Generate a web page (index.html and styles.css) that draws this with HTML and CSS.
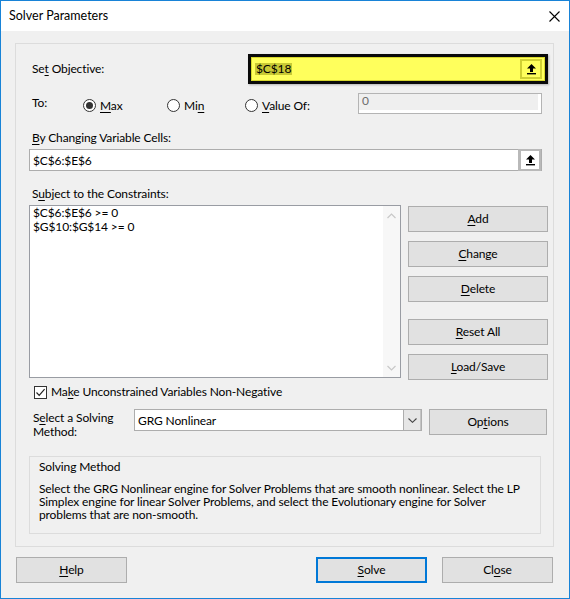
FILE: index.html
```html
<!DOCTYPE html>
<html>
<head>
<meta charset="utf-8">
<title>Solver Parameters</title>
<link rel="stylesheet" href="styles.css">
</head>
<body>
<div class="window">
  <div class="titlebar">
    <span class="title">Solver Parameters</span>
    <svg class="close" width="11" height="11" viewBox="0 0 11 11"><path d="M0.5 0.5 L10.5 10.5 M10.5 0.5 L0.5 10.5" stroke="#000" stroke-width="1.1" fill="none"/></svg>
  </div>
  <div class="client">
    <div class="group">
      <div class="row-obj">
        <span class="lbl obj-lbl">Se<u>t</u> Objective:</span>
        <div class="objbox">
          <div class="objinner">
            <span class="sel">$C$18</span>
            <span class="refbtn yellow">
              <svg width="11" height="12" viewBox="0 0 11 12"><path d="M5.5 1 L10 5.6 L7 5.6 L7 9 L4 9 L4 5.6 L1 5.6 Z" fill="#000"/><rect x="1" y="10" width="9" height="1.4" fill="#000"/></svg>
            </span>
          </div>
        </div>
      </div>

      <div class="row-to">
        <span class="lbl to-lbl">To:</span>
        <label class="radio r-max"><svg width="13" height="13" viewBox="0 0 13 13"><circle cx="6.5" cy="6.5" r="6" fill="#fff" stroke="#333"/><circle cx="6.5" cy="6.5" r="3.5" fill="#333"/></svg><span><u>M</u>ax</span></label>
        <label class="radio r-min"><svg width="13" height="13" viewBox="0 0 13 13"><circle cx="6.5" cy="6.5" r="6" fill="#fff" stroke="#333"/></svg><span>Mi<u>n</u></span></label>
        <label class="radio r-val"><svg width="13" height="13" viewBox="0 0 13 13"><circle cx="6.5" cy="6.5" r="6" fill="#fff" stroke="#333"/></svg><span><u>V</u>alue Of:</span></label>
        <div class="valbox"><div class="valinner">0</div></div>
      </div>

      <div class="lbl sec-lbl chg-lbl"><u>B</u>y Changing Variable Cells:</div>
      <div class="textbox">
        <span>$C$6:$E$6</span>
        <span class="refbtn grey">
          <svg width="11" height="12" viewBox="0 0 11 12"><path d="M5.5 1 L10 5.6 L7 5.6 L7 9 L4 9 L4 5.6 L1 5.6 Z" fill="#000"/><rect x="1" y="10" width="9" height="1.4" fill="#000"/></svg>
        </span>
      </div>

      <div class="lbl sec-lbl sub-lbl">S<u>u</u>bject to the Constraints:</div>
      <div class="row-cons">
        <div class="listbox">
          <div class="items">
            <div>$C$6:$E$6 &gt;= 0</div>
            <div>$G$10:$G$14 &gt;= 0</div>
          </div>
          <div class="vscroll">
            <svg width="9" height="6" viewBox="0 0 9 6"><path d="M0.5 5 L4.5 1 L8.5 5" stroke="#c8c8c8" fill="none" stroke-width="1.2"/></svg>
            <svg width="9" height="6" viewBox="0 0 9 6"><path d="M0.5 1 L4.5 5 L8.5 1" stroke="#c8c8c8" fill="none" stroke-width="1.2"/></svg>
          </div>
        </div>
        <div class="btncol">
          <button class="btn"><u>A</u>dd</button>
          <button class="btn"><u>C</u>hange</button>
          <button class="btn"><u>D</u>elete</button>
          <button class="btn gap-big"><u>R</u>eset All</button>
          <button class="btn"><u>L</u>oad/Save</button>
        </div>
      </div>

      <label class="check-row">
        <span class="checkbox"><svg width="11" height="11" viewBox="0 0 11 11"><path d="M1.5 5.5 L4.2 8.3 L9.6 2.2" stroke="#222" stroke-width="1.2" fill="none"/></svg></span>
        <span>Ma<u>k</u>e Unconstrained Variables Non-Negative</span>
      </label>

      <div class="row-method">
        <div class="lbl method-lbl">S<u>e</u>lect a Solving<br>Method:</div>
        <div class="combo">
          <span class="combo-text">GRG Nonlinear</span>
          <span class="combo-btn"><svg width="9" height="5" viewBox="0 0 9 5"><path d="M0.5 0.5 L4.5 4.3 L8.5 0.5" stroke="#444" fill="none" stroke-width="1.1"/></svg></span>
        </div>
        <button class="btn opt-btn">Op<u>t</u>ions</button>
      </div>

      <div class="infobox">
        <div class="info-title">Solving Method</div>
        <div class="info-text">Select the GRG Nonlinear engine for Solver Problems that are smooth nonlinear. Select the LP Simplex engine for linear Solver Problems, and select the Evolutionary engine for Solver problems that are non-smooth.</div>
      </div>
    </div>

    <div class="footer">
      <button class="btn fbtn help"><u>H</u>elp</button>
      <span class="spacer"></span>
      <button class="btn fbtn solve"><u>S</u>olve</button>
      <button class="btn fbtn close-btn">Cl<u>o</u>se</button>
    </div>
  </div>
</div>
</body>
</html>
```

FILE: styles.css
```css
* { box-sizing: border-box; }
html, body { margin: 0; padding: 0; background: #fff; }
body {
  font-family: "Lato", "Noto Sans", sans-serif;
  font-size: 12px;
  letter-spacing: -0.12px;
  color: #000;
}
u { text-decoration: underline; text-underline-offset: 2px; text-decoration-thickness: 1px; }

.window {
  width: 570px;
  height: 599px;
  border: 1px solid #1883d7;
  display: flex;
  flex-direction: column;
}
.titlebar {
  height: 30px;
  background: #fff;
  display: flex;
  align-items: center;
  justify-content: space-between;
  padding: 0 9px 0 8px;
}
.title { font-size: 12.5px; line-height: 14px; letter-spacing: 0; }
.close { display: block; }

.client {
  flex: 1;
  background: #f0f0f0;
  padding: 12px 15px 0 14px;
}
.group {
  width: 539px;
  height: 504px;
  border: 1px solid #dcdcdc;
  padding: 0 0 0 13px;
}
.lbl { line-height: 14px; white-space: nowrap; }

/* objective */
.row-obj {
  margin-top: 10px;
  height: 30px;
  display: flex;
  align-items: center;
}
.obj-lbl { width: 219px; padding-left: 3px; }
.objbox {
  width: 300px;
  height: 30px;
  border: 3px solid #0a0a0a;
  background: #d6d62c;
  padding: 1px;
  box-shadow: 1px 1px 2px rgba(0,0,0,0.25);
}
.objinner {
  height: 100%;
  background: #ffff5c;
  display: flex;
  align-items: center;
  justify-content: space-between;
  padding: 0 2px 0 3px;
}
.sel { background: #c9c935; line-height: 12px; padding: 0 1px; }
.refbtn {
  width: 22px;
  height: 20px;
  display: flex;
  align-items: center;
  justify-content: center;
}
.refbtn svg { display: block; }
.refbtn.yellow { border: 2px solid #d0d033; background: #ffff5c; }
.refbtn.grey { border: 2px solid #b9b9b9; border-left-width: 3px; background: #fff; height: 22px; width: 23px; }

/* To row */
.row-to {
  margin-top: 9px;
  height: 21px;
  display: flex;
  align-items: center;
}
.to-lbl { width: 54px; padding-left: 3px; margin-top: -2px; }
.radio {
  display: flex;
  align-items: center;
  gap: 4px;
  line-height: 14px;
  margin-top: 4px;
}
.radio svg { display: block; }
.r-max { width: 84px; }
.r-min { width: 78px; }
.r-val { width: 113px; }
.valbox {
  width: 184px;
  height: 21px;
  border: 1px solid #b4b4b4;
  background: #fff;
  padding: 0 3px 3px 0;
}
.valinner {
  height: 100%;
  background: #efefef;
  color: #6d6d6d;
  line-height: 13px;
  padding: 0 0 0 3px;
}

/* changing cells */
.chg-lbl { margin-top: 17px; padding-left: 3px; }
.textbox {
  margin-top: 4px;
  width: 513px;
  height: 22px;
  border: 1px solid #adadad;
  background: #fff;
  display: flex;
  align-items: center;
  justify-content: space-between;
  padding-left: 3px;
}
.sub-lbl { margin-top: 16px; padding-left: 3px; }

/* constraints */
.row-cons {
  margin-top: 4px;
  display: flex;
  align-items: flex-start;
}
.listbox {
  width: 372px;
  height: 173px;
  border: 1px solid #999ca3;
  background: #fff;
  display: flex;
}
.items {
  flex: 1;
  padding: 0 3px;
  line-height: 14px;
}
.vscroll {
  width: 17px;
  background: #f7f7f7;
  display: flex;
  flex-direction: column;
  justify-content: space-between;
  align-items: center;
  padding: 7px 0 6px;
}
.vscroll svg { display: block; }
.btncol {
  margin-left: 7px;
  margin-top: 1px;
  display: flex;
  flex-direction: column;
  gap: 9px;
}
.btn {
  font-family: inherit;
  font-size: 12px;
  letter-spacing: -0.12px;
  color: #000;
  background: #e1e1e1;
  border: 1px solid #adadad;
  border-radius: 0;
  padding: 0;
  margin: 0;
  width: 140px;
  height: 26px;
  line-height: 14px;
}
.btn.gap-big { margin-top: 8px; }

/* checkbox */
.check-row {
  margin-top: 5px;
  display: flex;
  align-items: center;
  gap: 4px;
  padding-left: 5px;
  line-height: 14px;
}
.checkbox {
  width: 13px;
  height: 13px;
  border: 1px solid #333;
  background: #fff;
  display: flex;
  align-items: center;
  justify-content: center;
}
.checkbox svg { display: block; }

/* method */
.row-method {
  margin-top: 10px;
  display: flex;
  align-items: flex-start;
}
.method-lbl {
  width: 105px;
  padding-left: 4px;
  padding-top: 2px;
  line-height: 14px;
}
.combo {
  width: 288px;
  height: 22px;
  border: 1px solid #adadad;
  background: #fff;
  display: flex;
  align-items: center;
  justify-content: space-between;
}
.combo-text { padding-left: 3px; }
.combo-btn {
  width: 18px;
  height: 20px;
  background: #e6e6e6;
  border-left: 1px solid #adadad;
  border-right: 1px solid #c4c4c4;
  display: flex;
  align-items: center;
  justify-content: center;
}
.combo-btn svg { display: block; }
.opt-btn { width: 118px; margin-left: 7px; }

/* info */
.infobox {
  margin-top: 17px;
  width: 512px;
  height: 78px;
  border: 1px solid #dcdcdc;
  padding: 3px 9px 0;
}
.info-title { line-height: 14px; }
.info-text { margin-top: 8px; line-height: 13px; }

/* footer */
.footer {
  margin-top: 10px;
  display: flex;
  align-items: center;
  padding-left: 1px;
}
.spacer { flex: 1; }
.fbtn { width: 111px; }
.solve { border: 2px solid #0078d7; margin-right: 15px; }
.close-btn { margin-right: 1px; }
```
